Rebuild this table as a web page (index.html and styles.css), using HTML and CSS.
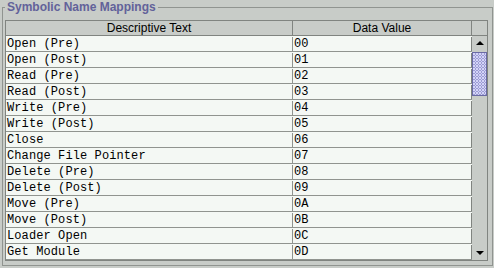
FILE: index.html
```html
<!DOCTYPE html>
<html lang="en">
<head>
    <meta charset="UTF-8">
    <title>Symbolic Name Mappings</title>
    <link rel="stylesheet" href="styles.css">
</head>
<body>

    <fieldset class="group">
        <legend>Symbolic Name Mappings</legend>
        <div class="pane">
            <div class="grid">
                <div class="head">
                    <div class="cell">Descriptive Text</div>
                    <div class="cell">Data Value</div>
                    <div class="corner"></div>
                </div>
                <div class="body">
                    <div class="rows">
                        <div class="row"><div class="cell">Open (Pre)</div><div class="cell">00</div></div>
                        <div class="row"><div class="cell">Open (Post)</div><div class="cell">01</div></div>
                        <div class="row"><div class="cell">Read (Pre)</div><div class="cell">02</div></div>
                        <div class="row"><div class="cell">Read (Post)</div><div class="cell">03</div></div>
                        <div class="row"><div class="cell">Write (Pre)</div><div class="cell">04</div></div>
                        <div class="row"><div class="cell">Write (Post)</div><div class="cell">05</div></div>
                        <div class="row"><div class="cell">Close</div><div class="cell">06</div></div>
                        <div class="row"><div class="cell">Change File Pointer</div><div class="cell">07</div></div>
                        <div class="row"><div class="cell">Delete (Pre)</div><div class="cell">08</div></div>
                        <div class="row"><div class="cell">Delete (Post)</div><div class="cell">09</div></div>
                        <div class="row"><div class="cell">Move (Pre)</div><div class="cell">0A</div></div>
                        <div class="row"><div class="cell">Move (Post)</div><div class="cell">0B</div></div>
                        <div class="row"><div class="cell">Loader Open</div><div class="cell">0C</div></div>
                        <div class="row"><div class="cell">Get Module</div><div class="cell">0D</div></div>
                    </div>
                    <!-- вертикальная полоса прокрутки -->
                    <div class="scrollbar">
                        <div class="arrow up"></div>
                        <div class="track">
                            <div class="thumb"></div>
                        </div>
                        <div class="arrow down"></div>
                    </div>
                </div>
            </div>
        </div>
    </fieldset>

</body>
</html>
```

FILE: styles.css
```css
body {
    margin: 0;
    background-color: #c8ccc8;
    font-family: "Liberation Sans", Arial, sans-serif;
    font-size: 12px;
    color: #000000;
}

/* Рамка группы с заголовком */
.group {
    box-sizing: border-box;
    width: 491px;
    height: 266px;
    margin: 0 0 0 2px;
    padding: 5px 4px 4px 2px;
    border: 1px solid #909490;
}
.group legend {
    margin: 0;
    padding: 0 2px;
    font-weight: bold;
    font-size: 12px;
    line-height: 15px;
    color: #62629a;
}

.pane {
    border: 1px solid #808480;
    height: 239px;
}
.grid {
    display: flex;
    flex-direction: column;
    height: 100%;
}

/* Заголовок таблицы */
.head {
    display: flex;
    height: 14px;
    border-bottom: 1px solid #808480;
    line-height: 15px;
}
.head .cell {
    text-align: center;
    border-right: 1px solid #808480;
}
.cell:nth-child(1) {
    width: 286px;
}
.cell:nth-child(2) {
    width: 178px;
}
.corner {
    width: 15px;
}

.body {
    display: flex;
    flex: 1;
}
.rows {
    width: 466px;
    background-color: #f4f8f4;
}
.row {
    display: flex;
    box-sizing: border-box;
    height: 16px;
    padding-top: 1px;
    border-bottom: 1px solid #90948f;
    font-family: "Liberation Mono", "Courier New", monospace;
    font-size: 12px;
    line-height: 14px;
    letter-spacing: 0.1px;
}
.row .cell {
    box-sizing: border-box;
    padding-left: 1px;
    border-right: 1px solid #90948f;
    white-space: pre;
    overflow: hidden;
}
.row .cell:nth-child(1) {
    width: 287px;
}
.row .cell:nth-child(2) {
    width: 179px;
    border-right-color: #808480;
}

/* Полоса прокрутки */
.scrollbar {
    display: flex;
    flex-direction: column;
    width: 15px;
}
.arrow {
    position: relative;
    height: 16px;
    background-color: #c8ccc8;
}
.arrow::after {
    content: "";
    position: absolute;
    left: 4px;
    border-left: 4px solid transparent;
    border-right: 4px solid transparent;
}
.arrow.up::after {
    top: 5px;
    border-bottom: 4px solid #000000;
}
.arrow.down::after {
    top: 7px;
    border-top: 4px solid #000000;
}
.track {
    flex: 1;
    background-color: #c8ccc8;
}
.thumb {
    box-sizing: border-box;
    height: 44px;
    border: 1px solid #6a6aa4;
    background-color: #9c9cd4;
    background-image:
        radial-gradient(circle at 1px 1px, #d4d4f8 0.7px, transparent 1px),
        radial-gradient(circle at 2.5px 2.5px, #d4d4f8 0.7px, transparent 1px);
    background-size: 3px 3px;
}
```
